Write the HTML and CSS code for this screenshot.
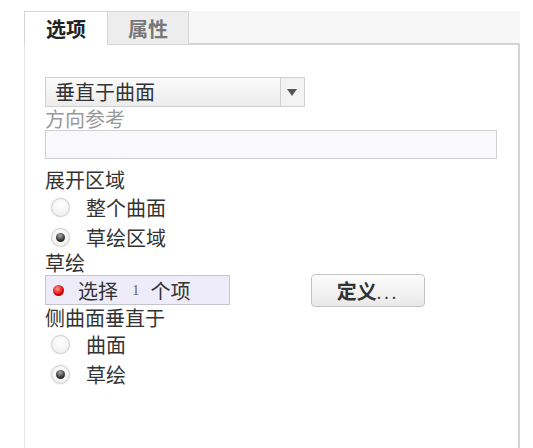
FILE: index.html
```html
<!DOCTYPE html>
<html lang="zh">

<head>
  <meta charset="UTF-8">
  <meta name="viewport" content="width=device-width, initial-scale=1.0">
  <title>选项</title>
  <link rel="stylesheet" href="styles.css">
</head>

<body>
  <div class="pane">
    <div class="tabs">
      <div class="tab active">选项</div>
      <div class="tab">属性</div>
      <div class="tab-fill"></div>
    </div>

    <div class="content">
      <div class="select">
        <span class="select-text">垂直于曲面</span>
        <span class="select-arrow"></span>
      </div>
      <div class="label muted">方向参考</div>
      <div class="input"></div>

      <div class="label group">展开区域</div>
      <div class="radio"><span class="dot"></span>整个曲面</div>
      <div class="radio"><span class="dot on"></span>草绘区域</div>

      <div class="label">草绘</div>
      <div class="pick-row">
        <div class="collector"><span class="red"></span>选择<span class="num">1</span>个项</div>
        <button class="btn">定义<span class="dots">...</span></button>
      </div>

      <div class="label">侧曲面垂直于</div>
      <div class="radio"><span class="dot"></span>曲面</div>
      <div class="radio"><span class="dot on"></span>草绘</div>
    </div>
  </div>
</body>

</html>
```

FILE: styles.css
```css
body {
  margin: 0;
  background: #fff;
  font-family: "Noto Sans CJK SC", "Noto Sans", sans-serif;
  font-size: 20px;
  color: #333;
}
.pane {
  margin: 11px 13px 0 24px;
  height: 437px;
  display: flex;
  flex-direction: column;
}
.tabs {
  display: flex;
  height: 34px;
  background: #f7f7f7;
}
.tab {
  width: 82px;
  display: flex;
  align-items: center;
  justify-content: center;
  font-weight: bold;
  color: #222;
  border: 1px solid #d4d4d4;
  border-bottom: none;
  background: #fff;
}
.tab + .tab {
  width: 80px;
  color: #777;
  background: #ededed;
  border-left: none;
  border-bottom: 1px solid #d4d4d4;
}
.tab-fill {
  flex: 1;
  border-bottom: 2px solid #d4d4d4;
}
.content {
  flex: 1;
  border-right: 2px solid #d4d4d4;
  border-left: 1px solid #e6e6e6;
  padding: 32px 20px 0 20px;
}
.select {
  width: 258px;
  height: 28px;
  display: flex;
  border: 1px solid #d0d0d0;
  background: linear-gradient(#fbfbfb, #ececec);
}
.select-text {
  flex: 1;
  padding-left: 9px;
  line-height: 28px;
}
.select-arrow {
  width: 23px;
  border-left: 1px solid #d0d0d0;
  background: #f3f3f3;
  position: relative;
}
.select-arrow::after {
  content: "";
  position: absolute;
  left: 6px;
  top: 11px;
  border-left: 5px solid transparent;
  border-right: 5px solid transparent;
  border-top: 7px solid #555;
}
.label {
  line-height: 22px;
}
.muted {
  line-height: 23px;
  color: #999;
}
.group {
  margin-top: 9px;
  line-height: 24px;
}
.input {
  width: 450px;
  height: 27px;
  border: 1px solid #d0d0d0;
  background: #f9f9fc;
}
.radio {
  display: flex;
  align-items: center;
  height: 30px;
  padding-left: 6px;
}
.dot {
  width: 17px;
  height: 17px;
  border-radius: 50%;
  border: 1px solid #cfcfcf;
  box-shadow: 0 0 2px #ddd;
  background: radial-gradient(circle at 50% 35%, #fff, #ececec);
  margin-right: 16px;
  position: relative;
}
.dot.on::after {
  content: "";
  position: absolute;
  left: 4px;
  top: 4px;
  width: 9px;
  height: 9px;
  border-radius: 50%;
  background: radial-gradient(circle at 45% 30%, #aaa, #222 70%);
}
.pick-row {
  display: flex;
  align-items: flex-start;
  height: 33px;
}
.collector {
  width: 176px;
  height: 28px;
  margin-top: 1px;
  display: flex;
  align-items: center;
  padding-left: 7px;
  border: 1px solid #c4c4cc;
  background: #eeecf9;
}
.red {
  width: 11px;
  height: 11px;
  border-radius: 50%;
  background: radial-gradient(circle at 40% 35%, #ff9a8a, #d80000 60%, #900);
  margin-right: 14px;
}
.num {
  font-family: "Liberation Serif", serif;
  font-size: 15px;
  color: #666;
  margin: 0 11px 0 14px;
}
.btn {
  margin-left: 81px;
  width: 114px;
  height: 33px;
  font-family: inherit;
  font-size: 20px;
  font-weight: bold;
  color: #333;
  border: 1px solid #c4c4c4;
  border-radius: 4px;
  background: linear-gradient(#fdfdfd, #e9e9e9);
}
.dots {
  font-weight: normal;
  letter-spacing: 3px;
  font-size: 16px;
}
```
